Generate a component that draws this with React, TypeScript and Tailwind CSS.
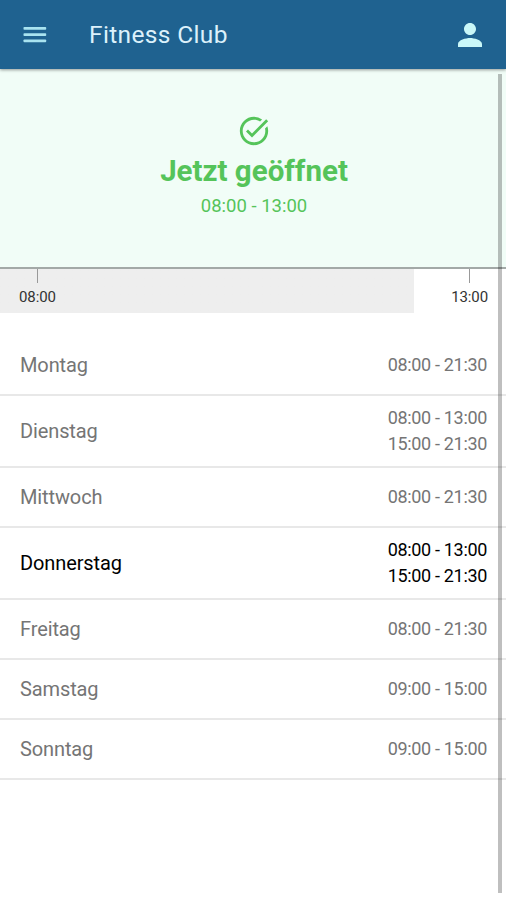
import React from "react";
import { MdPerson, MdTaskAlt } from "react-icons/md";

const days = [
  { name: "Montag", hours: ["08:00 - 21:30"] },
  { name: "Dienstag", hours: ["08:00 - 13:00", "15:00 - 21:30"] },
  { name: "Mittwoch", hours: ["08:00 - 21:30"] },
  { name: "Donnerstag", hours: ["08:00 - 13:00", "15:00 - 21:30"], today: true },
  { name: "Freitag", hours: ["08:00 - 21:30"] },
  { name: "Samstag", hours: ["09:00 - 15:00"] },
  { name: "Sonntag", hours: ["09:00 - 15:00"] },
];

function MenuIcon() {
  return (
    <svg viewBox="0 0 30 30" className="size-[30px]" fill="#a9e3f0">
      <rect x="3.5" y="7" width="22.7" height="2.8" rx="0.8" />
      <rect x="3.5" y="13.2" width="22.7" height="2.8" rx="0.8" />
      <rect x="3.5" y="19.4" width="22.7" height="2.8" rx="0.8" />
    </svg>
  );
}

function NavBar() {
  return (
    <header className="z-10 flex h-[69px] shrink-0 items-center bg-[#1f6290] pr-[18px] pl-5 shadow-[0_1px_3px_rgba(0,0,0,0.4)]">
      <button aria-label="Menü">
        <MenuIcon />
      </button>
      <h1 className="ml-[39px] flex-1 pt-[2px] text-[24.5px] tracking-[0.35px] text-[#dcf1fb]">
        Fitness Club
      </h1>
      <button aria-label="Profil">
        <MdPerson className="size-[36px] text-[#c9f7f8]" />
      </button>
    </header>
  );
}

function OpenStatus() {
  return (
    <section className="flex h-[200px] shrink-0 flex-col items-center border-b-2 border-[#a3a9a7] bg-[#f1fdf7] pt-[45px] pl-[2px] text-[#55c45a]">
      <MdTaskAlt className="size-[34px]" />
      <h2 className="mt-[3px] text-[29.5px] leading-[40px] font-bold">
        Jetzt geöffnet
      </h2>
      <p className="mt-px text-[18.5px] leading-[28px]">08:00 - 13:00</p>
    </section>
  );
}

function Tick({ label }: { label: string }) {
  return (
    <div className="flex flex-col items-center">
      <div className="h-[14px] w-px bg-[#999]" />
      <span className="mt-1 text-[15px] leading-5 tracking-[-0.1px] text-[#333]">
        {label}
      </span>
    </div>
  );
}

function Timeline() {
  return (
    <div className="flex h-11 shrink-0 justify-between bg-linear-to-r from-[#eeeeee] from-[414px] to-white to-[414px] pr-[18px] pl-[19px]">
      <Tick label="08:00" />
      <Tick label="13:00" />
    </div>
  );
}

function App() {
  return (
    <div className="relative flex h-[900px] w-full flex-col overflow-hidden bg-white font-[Roboto,sans-serif]">
      <NavBar />
      <OpenStatus />
      <Timeline />

      {/* opening hours of the week */}
      <ul className="mt-[23px]">
        {days.map((day) => (
          <li
            key={day.name}
            className={`flex items-center justify-between border-b-2 border-[#e8e8e8] pr-[19px] pl-5 ${
              day.hours.length > 1 ? "h-[72px]" : "h-[60px]"
            } ${day.today ? "text-black" : "text-[#757575]"}`}
          >
            <span className="text-[20px] tracking-[-0.12px]">{day.name}</span>
            <div className="text-right text-[18px] leading-[26px] tracking-[-0.33px]">
              {day.hours.map((h) => (
                <p key={h}>{h}</p>
              ))}
            </div>
          </li>
        ))}
      </ul>

      {/* scroll indicator */}
      <div className="absolute top-[74px] right-1 h-[819px] w-1 bg-black/25" />
    </div>
  );
}

export default App;
